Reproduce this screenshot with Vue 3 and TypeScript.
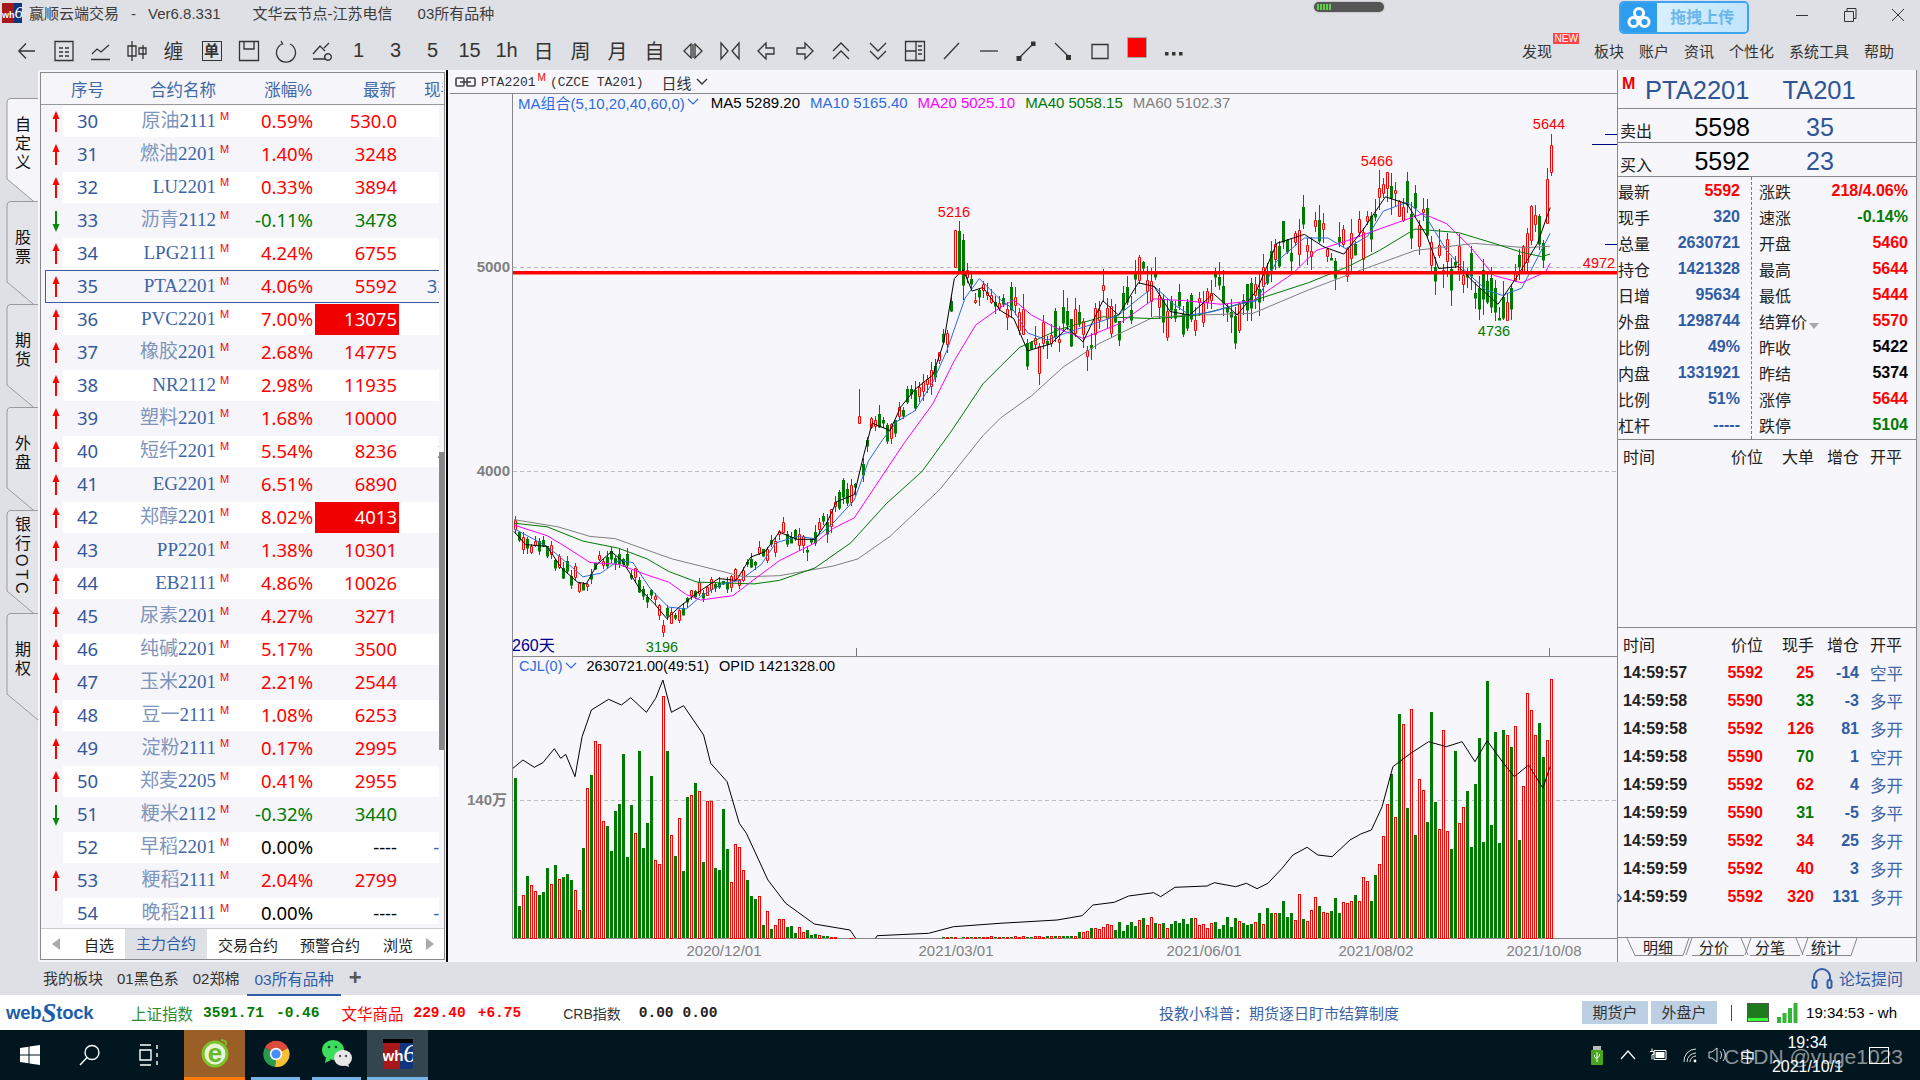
<template>
  <div class="app">
    <header class="top">
      <div class="title-row">
        <div class="wh-logo small"><span>wh</span><i>6</i></div>
        <span class="t1">赢顺云端交易</span>
        <span class="t2">-</span>
        <span class="t3">Ver6.8.331</span>
        <span class="t4">文华云节点-江苏电信</span>
        <span class="t5">03所有品种</span>
        <div class="pill"><b></b><b></b><b></b><b></b><b></b></div>
        <div class="upload">
          <div class="up-ico">
            <svg width="26" height="26" viewBox="0 0 26 26" fill="none" stroke="#fff" stroke-width="3">
              <circle cx="13" cy="8" r="4.6" />
              <circle cx="7.5" cy="17" r="4.6" />
              <circle cx="18.5" cy="17" r="4.6" />
            </svg>
          </div>
          <div class="up-txt">拖拽上传</div>
        </div>
        <div class="win-btns">
          <svg width="14" height="14" viewBox="0 0 14 14" fill="none" stroke="#333"><path d="M1 7.5h12" /></svg>
          <svg width="14" height="14" viewBox="0 0 14 14" fill="none" stroke="#333"><path d="M1.5 3.5h9v10h-9zM4 3.5V.5h9v10h-2.5" /></svg>
          <svg width="14" height="14" viewBox="0 0 14 14" fill="none" stroke="#333"><path d="M1 1l12 12M13 1L1 13" /></svg>
        </div>
      </div>
      <div class="tool-row">
        <div v-for="(it, i) in tools" :key="i" class="tool">
          <svg v-if="it.d" width="24" height="24" viewBox="0 0 24 24" fill="none" stroke="#333" stroke-width="1.3">
            <path :d="it.d" />
            <path v-if="it.f" :d="it.f" fill="#333" stroke="none" />
          </svg>
          <span v-else-if="it.red" class="red-sq"></span>
          <span v-else-if="it.box" class="box-t">{{ it.box }}</span>
          <span v-else class="tool-t">{{ it.t }}</span>
        </div>
        <div class="menus">
          <span class="m-find">发现<em>NEW</em></span>
          <span>板块</span>
          <span>账户</span>
          <span>资讯</span>
          <span>个性化</span>
          <span>系统工具</span>
          <span>帮助</span>
        </div>
      </div>
    </header>

    <main class="body">
      <aside class="side-tabs">
        <div v-for="(s, i) in sideTabs" :key="s" class="side-tab" :class="{ on: i === 0 }">
          <svg width="38" height="112" viewBox="0 0 38 112">
            <path d="M38 .5H11Q7 .5 7 5V81L38 107" />
          </svg>
          <span class="side-label">{{ s }}</span>
        </div>
      </aside>

      <section class="list-wrap">
        <div class="list">
          <div class="list-head">
            <span class="h1">序号</span>
            <span class="h2">合约名称</span>
            <span class="h3">涨幅%</span>
            <span class="h4">最新</span>
            <span class="h5">现手</span>
          </div>
          <div class="list-mid">
            <div class="rows">
              <div v-for="r in rows" :key="r.n" class="row" :class="{ sel: r.n === 35 }">
                <div class="arrow">
                  <svg v-if="dirOf(r) === 'up'" width="10" height="22" viewBox="0 0 10 22">
                    <path d="M5 0L8.5 8H6V21H4V8H1.5z" fill="#f00" />
                  </svg>
                  <svg v-else-if="dirOf(r) === 'down'" width="10" height="22" viewBox="0 0 10 22">
                    <path d="M4 1H6V14H8.5L5 22 1.5 14H4z" fill="#0a8a0a" />
                  </svg>
                </div>
                <div class="cells">
                  <span class="seq">{{ r.n }}</span>
                  <span class="name"><span class="cn">{{ r.cn }}</span>{{ r.code }}</span>
                  <sup class="m">M</sup>
                  <span class="pct" :class="dirOf(r)">{{ r.pct }}</span>
                  <span class="last" :class="[dirOf(r), { hi: r.hi }]">{{ r.last }}</span>
                  <span class="hand"><span>{{ r.hand }}</span></span>
                </div>
              </div>
            </div>
            <div class="scroll"><div class="thumb"></div></div>
          </div>
          <div class="list-tabs">
            <svg class="lt-arrow" width="10" height="14" viewBox="0 0 10 14"><path d="M9 1v12L1 7z" fill="#aaa" /></svg>
            <span class="lt t-a">自选</span>
            <span class="lt t-b">主力合约</span>
            <span class="lt t-c">交易合约</span>
            <span class="lt t-d">预警合约</span>
            <span class="lt t-e">浏览</span>
            <svg class="lt-arrow r" width="10" height="14" viewBox="0 0 10 14"><path d="M1 1v12l8-6z" fill="#aaa" /></svg>
          </div>
        </div>
      </section>
      <div class="sep"></div>

      <section class="chart">
        <div class="chart-head">
          <svg width="21" height="10" viewBox="0 0 21 10" fill="none" stroke="#444" stroke-width="1.6">
            <rect x="1" y="1" width="8" height="8" rx="1" />
            <rect x="12" y="1" width="8" height="8" rx="1" />
            <path d="M5 5h11" />
          </svg>
          <span class="ch-code">PTA2201</span><sup class="ch-m">M</sup>
          <span class="ch-ex">(CZCE TA201)</span>
          <span class="ch-period">日线</span>
          <svg width="12" height="8" viewBox="0 0 12 8" fill="none" stroke="#333" stroke-width="1.4"><path d="M1 1l5 5 5-5" /></svg>
        </div>
        <div class="plot">
          <svg class="plot-svg" width="1169" height="868" viewBox="448 94 1169 868">
            <path d="M512.5 94V938M512 656.5H1617M512 938.5H1617" stroke="#888" fill="none" />
            <path d="M513 267.5H1617M513 471.5H1617M513 800.5H1617" stroke="#bdbdbd" stroke-dasharray="4 3" fill="none" />
            <path d="M856.5 648v8M1549.5 648v8" stroke="#777" fill="none" />
            <g fill="none" stroke-width="1">
              <path :d="candles.redWick" stroke="#f00" />
              <path :d="candles.greenWick" stroke="#007a00" />
              <path :d="candles.redBody" stroke="#f00" fill="#f6f6fb" />
              <path :d="candles.greenBody" fill="#007a00" stroke="none" />
            </g>
            <polyline v-for="l in maLines" :key="l.color" :points="l.pts" :stroke="l.color" fill="none" stroke-width="1" />
            <rect x="513" y="271" width="1104" height="3.5" fill="#f00" />
            <path d="M1605 134.5H1617M1592 144.5H1617M1605 244.5H1617" stroke="#00008b" fill="none" />

            <path :d="vols.red" stroke="#f00" fill="#f6f6fb" shape-rendering="crispEdges" />
            <path :d="vols.green" fill="#007a00" shape-rendering="crispEdges" />
            <polyline :points="cjlPts1" fill="none" stroke="#000" />
            <polyline :points="cjlPts2" fill="none" stroke="#000" />

            <g class="axis-t">
              <text x="510" y="271.5">5000</text>
              <text x="510" y="475.5">4000</text>
              <text x="507" y="805">140万</text>
            </g>
            <g class="peak">
              <text x="954" y="217" fill="#f00">5216</text>
              <text x="1377" y="166" fill="#f00">5466</text>
              <text x="1549" y="129" fill="#f00">5644</text>
              <text x="662" y="652" fill="#007a00">3196</text>
              <text x="1494" y="336" fill="#007a00">4736</text>
              <text x="1599" y="268" fill="#f00">4972</text>
            </g>
            <text class="days" x="512" y="651">260天</text>
            <g class="dates">
              <text x="724" y="956">2020/12/01</text>
              <text x="956" y="956">2021/03/01</text>
              <text x="1204" y="956">2021/06/01</text>
              <text x="1376" y="956">2021/08/02</text>
              <text x="1544" y="956">2021/10/08</text>
            </g>
          </svg>
          <div class="legend ma">
            <span class="lg-blue">MA组合(5,10,20,40,60,0)</span>
            <svg width="12" height="8" viewBox="0 0 12 8" fill="none" stroke="#2f6be0" stroke-width="1.2"><path d="M1 1l5 5 5-5" /></svg>
            <span v-for="m in maLegend" :key="m.t" :style="{ color: m.c }" class="lg-item">{{ m.t }}</span>
          </div>
          <div class="legend vol">
            <span class="lg-blue">CJL(0)</span>
            <svg width="12" height="8" viewBox="0 0 12 8" fill="none" stroke="#2f6be0" stroke-width="1.2"><path d="M1 1l5 5 5-5" /></svg>
            <span class="lg-a">2630721.00(49:51)</span>
            <span class="lg-b">OPID 1421328.00</span>
          </div>
        </div>
      </section>

      <section class="quote">
        <div class="q-title">
          <b class="q-m">M</b>
          <span class="q-c1">PTA2201</span>
          <span class="q-c2">TA201</span>
        </div>
        <div class="q-book">
          <span class="q-lab">卖出</span><span class="q-price">5598</span><span class="q-vol">35</span>
        </div>
        <div class="q-book">
          <span class="q-lab">买入</span><span class="q-price">5592</span><span class="q-vol">23</span>
        </div>
        <div class="q-info">
          <div class="q-col">
            <div v-for="k in infoL" :key="k.l + k.v" class="kv">
              <span>{{ k.l }}</span><b :class="k.c">{{ k.v }}</b>
            </div>
          </div>
          <div class="q-col rr">
            <div v-for="k in infoR" :key="k.l" class="kv">
              <span>{{ k.l }}<i v-if="k.l === '结算价'" class="tri"></i></span><b :class="k.c">{{ k.v }}</b>
            </div>
          </div>
        </div>
        <div class="q-big">
          <div class="tk head first">
            <span>时间</span><span class="ra">价位</span><span class="ra">大单</span><span class="ra">增仓</span><span>开平</span>
          </div>
        </div>
        <div class="q-ticks">
          <div class="tk head">
            <span>时间</span><span class="ra">价位</span><span class="ra">现手</span><span class="ra">增仓</span><span>开平</span>
          </div>
          <div v-for="(t, i) in ticks" :key="i" class="tk line">
            <b class="tm"><i v-if="i === 8" class="cur">›</i>{{ t.time }}</b>
            <b class="ra red">{{ t.p }}</b>
            <b class="ra" :class="t.up ? 'red' : 'green'">{{ t.h }}</b>
            <b class="ra blue">{{ t.d }}</b>
            <span class="kp">{{ t.k }}</span>
          </div>
        </div>
        <div class="q-tabs">
          <svg class="q-tab-line" width="240" height="24" viewBox="1618 938 240 24" fill="none" stroke="#888">
            <path d="M1627 939L1635 956.5H1683L1689 939" />
            <path d="M1686 956L1692 939M1741 939L1748 956M1692 956.5H1744" />
            <path d="M1745 956L1751 939M1796 939L1803 956M1750 956.5H1800" />
            <path d="M1802 956L1808 939M1857 939L1851 956.5H1806" />
          </svg>
          <span class="q-tab">明细</span>
          <span class="q-tab">分价</span>
          <span class="q-tab">分笔</span>
          <span class="q-tab">统计</span>
        </div>
      </section>
    </main>

    <div class="blocks">
      <span class="b-1">我的板块</span>
      <span class="b-2">01黑色系</span>
      <span class="b-3">02郑棉</span>
      <span class="b-4">03所有品种</span>
      <span class="b-plus">+</span>
      <div class="forum">
        <svg width="24" height="24" viewBox="0 0 24 24" fill="none" stroke="#2f5ca5" stroke-width="2">
          <path d="M4 15V11a8 8 0 0 1 16 0v4" />
          <rect x="2.5" y="14" width="4" height="8" rx="2" />
          <rect x="17.5" y="14" width="4" height="8" rx="2" />
        </svg>
        <span>论坛提问</span>
      </div>
    </div>

    <div class="status">
      <div class="webstock">web<i>S</i>tock</div>
      <span class="s-name g1">上证指数</span>
      <span class="s-num green w-a">3591.71</span>
      <span class="s-num green w-b">-0.46</span>
      <span class="s-name r1">文华商品</span>
      <span class="s-num red w-a2">229.40</span>
      <span class="s-num red w-b">+6.75</span>
      <span class="s-name k1">CRB指数</span>
      <span class="s-num k2">0.00</span>
      <span class="s-num k3">0.00</span>
      <span class="s-note">投教小科普：期货逐日盯市结算制度</span>
      <span class="s-btn b1">期货户</span>
      <span class="s-btn">外盘户</span>
      <i class="s-bar"></i>
      <div class="meter"></div>
      <svg class="signal" width="21" height="20" viewBox="0 0 21 20" fill="#35b535">
        <rect x="0" y="14" width="4" height="6" />
        <rect x="5.5" y="10" width="4" height="10" />
        <rect x="11" y="5" width="4" height="15" />
        <rect x="16.5" y="0" width="4" height="20" />
      </svg>
      <span class="s-time">19:34:53 - wh</span>
    </div>

    <footer class="taskbar">
      <div class="tb-ico">
        <svg width="20" height="20" viewBox="0 0 20 20" fill="#fff">
          <path d="M0 3l8.5-1.2V9.5H0zM9.5 1.6L20 0v9.5H9.5zM0 10.5h8.5v7.7L0 17zM9.5 10.5H20V20L9.5 18.4z" />
        </svg>
      </div>
      <div class="tb-ico">
        <svg width="22" height="22" viewBox="0 0 22 22" fill="none" stroke="#fff" stroke-width="1.4">
          <circle cx="13" cy="8.5" r="7" />
          <path d="M8 13.5L1 21" />
        </svg>
      </div>
      <div class="tb-ico">
        <svg width="22" height="22" viewBox="0 0 22 22" fill="none" stroke="#fff" stroke-width="1.4">
          <path d="M1 1h11M1 21h11M1 6h11v10H1zM18 1v4M18 9v4M18 17v4" />
        </svg>
      </div>
      <div class="tile ie">
        <svg width="30" height="34" viewBox="0 0 30 34">
          <circle cx="15" cy="17" r="12" fill="#e6f5d4" stroke="#7cc22f" stroke-width="3" />
          <path d="M21 3Q27 3 26 8" fill="none" stroke="#7cc22f" stroke-width="2" />
          <text x="15" y="25" text-anchor="middle" class="ie-e">e</text>
        </svg>
      </div>
      <div class="tile run">
        <svg width="28" height="28" viewBox="0 0 28 28">
          <path d="M14 14L3 7.5A13 13 0 0 1 26 8z" fill="#dd4a3c" />
          <path d="M14 14L26 8A13 13 0 0 1 13 27z" fill="#f5c033" />
          <path d="M14 14L13 27A13 13 0 0 1 3 7.5z" fill="#2a9a4f" />
          <circle cx="14" cy="14" r="6.2" fill="#fff" />
          <circle cx="14" cy="14" r="4.6" fill="#4b8bf5" />
        </svg>
      </div>
      <div class="tile run">
        <svg width="32" height="30" viewBox="0 0 32 30">
          <ellipse cx="12" cy="11" rx="11" ry="10" fill="#3ddc5c" />
          <path d="M5 18l-1 6 6-3z" fill="#3ddc5c" />
          <ellipse cx="22" cy="19" rx="9" ry="8" fill="#e8e8e8" />
          <path d="M27 24l1 4-5-2z" fill="#e8e8e8" />
          <circle cx="8" cy="8" r="1.3" fill="#0a4a2a" />
          <circle cx="15" cy="8" r="1.3" fill="#0a4a2a" />
          <circle cx="19" cy="17" r="1.2" fill="#555" />
          <circle cx="25" cy="17" r="1.2" fill="#555" />
        </svg>
      </div>
      <div class="tile run active">
        <div class="wh-logo big"><span>wh</span><i>6</i></div>
      </div>
      <div class="tray">
        <svg width="14" height="19" viewBox="0 0 14 19">
          <rect x="3" y="0" width="8" height="4" fill="#bbb" />
          <rect x="1" y="4" width="12" height="15" rx="1" fill="#49a51f" />
          <path d="M7 6v10M4.5 9v2l2.5 2M9.5 8v2L7 12" stroke="#fff" fill="none" />
        </svg>
        <svg class="tr-up" width="16" height="10" viewBox="0 0 16 10" fill="none" stroke="#fff" stroke-width="1.2"><path d="M1 9l7-8 7 8" /></svg>
        <svg class="tr-bat" width="18" height="14" viewBox="0 0 18 14" fill="none" stroke="#fff"><path d="M5 2.5h12v9H5zM3 .5v3M1 3.5h4v3H3v5" /><rect x="6.5" y="4" width="9" height="6" fill="#fff" stroke="none" /></svg>
        <svg class="tr-wifi" width="18" height="16" viewBox="0 0 18 16" fill="none" stroke="#ddd"><path d="M3 15A12 12 0 0 1 15 2M6 15a9 9 0 0 1 9-9M9 15a6 6 0 0 1 6-6" /><circle cx="14" cy="14" r="1.4" fill="#fff" stroke="none" /></svg>
        <svg class="tr-vol" width="20" height="18" viewBox="0 0 20 18" fill="none" stroke="#ddd"><path d="M1 6h3l5-4v14l-5-4H1zM12 5a6 6 0 0 1 0 8M15 3a9 9 0 0 1 0 12" /></svg>
        <span class="tr-zh">中</span>
        <div class="clock"><span>19:34</span><span>2021/10/1</span></div>
        <i class="tr-note"></i>
      </div>
      <span class="watermark">CSDN @yuge1023</span>
    </footer>
  </div>
</template>

<script setup lang="ts">
type Row = { n: number; cn: string; code: string; pct: string; last: string; hand?: string; hi?: boolean };
type Tool = { d?: string; f?: string; t?: string; box?: string; red?: boolean };
type Pt = [number, number];

const tools: Tool[] = [
  { d: 'M20 12H4M11 4.5 3.8 12l7.2 7.5' },
  { d: 'M3 2.5h18v19H3zM7 9h4M13 9h4M7 13h4M13 13h4M7 17h4M13 17h4' },
  { d: 'M2 20.5H21M3 15l5-5 4 3 8-7' },
  { d: 'M6 2v20M2 7h8v10H2zM17 6v14M13 9h7v6h-7z' },
  { t: '缠' },
  { box: '单' },
  { d: 'M2.5 2.5H21.5V21.5H2.5zM7 2.5V10H17V2.5M7 21.5' },
  { d: 'M8 5A9.5 9.5 0 1 0 16 5M7 2l2 3.5' },
  { d: 'M2 15l7-8 5 5M2 20H14M13 9l5-5' , f: 'M17 14a4 4 0 1 1-.1 0zm0 1.4a2.6 2.6 0 1 0 .1 0z' },
  { t: '1' },
  { t: '3' },
  { t: '5' },
  { t: '15' },
  { t: '1h' },
  { t: '日' },
  { t: '周' },
  { t: '月' },
  { t: '自' },
  { d: 'M10 5L3 12l7 7zM14 5l7 7-7 7zM12 5v14' },
  { d: 'M3 4l7 8-7 8zM21 4l-7 8 7 8z' },
  { d: 'M11 4L3 12l8 8v-5h8V9h-8z' },
  { d: 'M13 4l8 8-8 8v-5H5V9h8z' },
  { d: 'M4 12l8-8 8 8M4 20l8-8 8 8' },
  { d: 'M4 4l8 8 8-8M4 12l8 8 8-8' },
  { d: 'M2.5 2.5h19v19h-19zM13 2.5v19M2.5 12H13M15 7h4M15 11h4M15 15h4' },
  { d: 'M4 20L19 4' },
  { d: 'M3 12h18' },
  { d: 'M5 19L19 5', f: 'M2.5 17h5v5h-5zM17 2.5h4.5v4.5H17z' },
  { d: 'M4 4L18 18', f: 'M15 16h5v5h-5z' },
  { d: 'M4 5.5h16v14H4z' },
  { red: true },
  { d: 'M0 0', f: 'M3 13h3.5v3.5H3zM10 13h3.5v3.5H10zM17 13h3.5v3.5H17z' }
];

const sideTabs = ['自定义', '股票', '期货', '外盘', '银行OTC', '期权'];

const rows: Row[] = [
  { n: 30, cn: '原油', code: '2111', pct: '0.59%', last: '530.0' },
  { n: 31, cn: '燃油', code: '2201', pct: '1.40%', last: '3248', hand: '152' },
  { n: 32, cn: '', code: 'LU2201', pct: '0.33%', last: '3894' },
  { n: 33, cn: '沥青', code: '2112', pct: '-0.11%', last: '3478' },
  { n: 34, cn: '', code: 'LPG2111', pct: '4.24%', last: '6755' },
  { n: 35, cn: '', code: 'PTA2201', pct: '4.06%', last: '5592', hand: '3200' },
  { n: 36, cn: '', code: 'PVC2201', pct: '7.00%', last: '13075', hi: true },
  { n: 37, cn: '橡胶', code: '2201', pct: '2.68%', last: '14775' },
  { n: 38, cn: '', code: 'NR2112', pct: '2.98%', last: '11935' },
  { n: 39, cn: '塑料', code: '2201', pct: '1.68%', last: '10000' },
  { n: 40, cn: '短纤', code: '2201', pct: '5.54%', last: '8236', hand: '215' },
  { n: 41, cn: '', code: 'EG2201', pct: '6.51%', last: '6890' },
  { n: 42, cn: '郑醇', code: '2201', pct: '8.02%', last: '4013', hi: true },
  { n: 43, cn: '', code: 'PP2201', pct: '1.38%', last: '10301', hand: '188' },
  { n: 44, cn: '', code: 'EB2111', pct: '4.86%', last: '10026' },
  { n: 45, cn: '尿素', code: '2201', pct: '4.27%', last: '3271' },
  { n: 46, cn: '纯碱', code: '2201', pct: '5.17%', last: '3500' },
  { n: 47, cn: '玉米', code: '2201', pct: '2.21%', last: '2544' },
  { n: 48, cn: '豆一', code: '2111', pct: '1.08%', last: '6253' },
  { n: 49, cn: '淀粉', code: '2111', pct: '0.17%', last: '2995' },
  { n: 50, cn: '郑麦', code: '2205', pct: '0.41%', last: '2955' },
  { n: 51, cn: '粳米', code: '2112', pct: '-0.32%', last: '3440' },
  { n: 52, cn: '早稻', code: '2201', pct: '0.00%', last: '----', hand: '------' },
  { n: 53, cn: '粳稻', code: '2111', pct: '2.04%', last: '2799' },
  { n: 54, cn: '晚稻', code: '2111', pct: '0.00%', last: '----', hand: '------' }
];

function dirOf(r: Row) {
  if (r.pct.startsWith('-')) return 'down';
  return r.pct === '0.00%' ? 'flat' : 'up';
}

const infoL = [
  { l: '最新', v: '5592', c: 'red' },
  { l: '现手', v: '320', c: 'blue' },
  { l: '总量', v: '2630721', c: 'blue' },
  { l: '持仓', v: '1421328', c: 'blue' },
  { l: '日增', v: '95634', c: 'blue' },
  { l: '外盘', v: '1298744', c: 'blue' },
  { l: '比例', v: '49%', c: 'blue' },
  { l: '内盘', v: '1331921', c: 'blue' },
  { l: '比例', v: '51%', c: 'blue' },
  { l: '杠杆', v: '-----', c: 'blue' }
];
const infoR = [
  { l: '涨跌', v: '218/4.06%', c: 'red' },
  { l: '速涨', v: '-0.14%', c: 'green' },
  { l: '开盘', v: '5460', c: 'red' },
  { l: '最高', v: '5644', c: 'red' },
  { l: '最低', v: '5444', c: 'red' },
  { l: '结算价', v: '5570', c: 'red' },
  { l: '昨收', v: '5422', c: 'black' },
  { l: '昨结', v: '5374', c: 'black' },
  { l: '涨停', v: '5644', c: 'red' },
  { l: '跌停', v: '5104', c: 'green' }
];
const ticks = [
  { time: '14:59:57', p: 5592, h: 25, up: true, d: -14, k: '空平' },
  { time: '14:59:58', p: 5590, h: 33, up: false, d: -3, k: '多平' },
  { time: '14:59:58', p: 5592, h: 126, up: true, d: 81, k: '多开' },
  { time: '14:59:58', p: 5590, h: 70, up: false, d: 1, k: '空开' },
  { time: '14:59:59', p: 5592, h: 62, up: true, d: 4, k: '多开' },
  { time: '14:59:59', p: 5590, h: 31, up: false, d: -5, k: '多平' },
  { time: '14:59:59', p: 5592, h: 34, up: true, d: 25, k: '多开' },
  { time: '14:59:59', p: 5592, h: 40, up: true, d: 3, k: '多开' },
  { time: '14:59:59', p: 5592, h: 320, up: true, d: 131, k: '多开' }
];

const maLegend = [
  { t: 'MA5 5289.20', c: '#000' },
  { t: 'MA10 5165.40', c: '#2f6be0' },
  { t: 'MA20 5025.10', c: '#ff00ff' },
  { t: 'MA40 5058.15', c: '#007a00' },
  { t: 'MA60 5102.37', c: '#808080' }
];

// raw coordinates were read off two crops of the chart, so map them back to page pixels
function toPts(raw: number[], ox: number, sx: number, oy: number, sy: number): Pt[] {
  const out: Pt[] = [];
  for (let i = 0; i < raw.length; i += 2) out.push([ox + raw[i] / sx, oy + raw[i + 1] / sy]);
  return out;
}
const join2 = (a: number[], b: number[]) => [...toPts(a, 440, 2.8, 100, 2.8), ...toPts(b, 1000, 2.53, 100, 2.79)];
const str = (p: Pt[]) => p.map((q) => q[0].toFixed(1) + ',' + q[1].toFixed(1)).join(' ');

const ma5 = join2(
  [207,1208,240,1245,300,1250,340,1310,385,1350,410,1355,440,1300,480,1265,510,1290,560,1370,600,1410,635,1452,670,1420,720,1380,780,1340,830,1345,870,1280,910,1265,950,1210,1000,1230,1050,1230,1085,1180,1110,1125,1160,1105,1185,1000,1210,905,1260,925,1290,860,1330,810,1380,770,1410,680,1440,500,1465,475,1490,535,1520,525,1570,590],
  [35,610,70,700,100,690,130,680,170,635,210,675,260,560,300,600,350,510,390,520,430,590,480,600,540,540,600,600,650,530,700,400,770,375,820,410,870,430,920,360,975,270,1030,290,1080,380,1110,470,1160,465,1200,510,1260,570,1310,490,1360,400,1392,300]
);
const ma10 = join2(
  [207,1200,300,1250,360,1300,400,1335,450,1325,500,1290,540,1295,590,1370,640,1420,690,1425,730,1390,790,1355,840,1345,900,1300,940,1240,1000,1222,1050,1228,1100,1185,1160,1120,1200,1010,1240,950,1280,900,1330,870,1380,790,1420,700,1470,555,1510,500,1570,560],
  [30,580,70,650,120,670,180,645,250,620,300,600,350,555,390,520,440,570,480,600,540,590,600,570,650,560,700,450,770,385,830,385,875,415,930,380,970,310,1030,285,1080,330,1130,420,1180,480,1230,530,1270,545,1320,525,1360,440,1392,372]
);
const ma20 = join2(
  [207,1190,300,1220,350,1250,420,1295,500,1300,580,1330,640,1350,690,1385,730,1400,820,1388,870,1350,950,1290,1050,1240,1100,1200,1160,1170,1220,1080,1300,960,1380,850,1440,730,1500,630,1570,580],
  [35,558,80,600,140,635,210,665,300,625,390,555,470,560,560,570,640,560,740,485,800,420,880,392,960,360,1070,317,1130,345,1190,410,1250,490,1320,510,1380,480,1392,455]
);
const ma40 = join2(
  [207,1185,300,1195,400,1235,500,1255,580,1285,640,1320,720,1350,880,1355,950,1345,1050,1310,1150,1240,1250,1130,1350,1040,1430,930,1520,795,1570,745],
  [50,690,150,640,260,605,390,610,500,600,640,560,780,510,880,465,960,420,1050,360,1160,370,1250,400,1320,425,1370,437,1392,430]
);
const ma60 = join2(
  [207,1175,330,1195,420,1222,490,1228,650,1285,850,1335,950,1332,1100,1305,1170,1285,1260,1222,1400,1090,1520,940,1570,890],
  [80,825,160,745,250,680,390,605,500,600,640,595,780,530,900,480,1050,420,1200,400,1330,412,1392,408]
);
const maLines = [
  { color: '#808080', pts: str(ma60) },
  { color: '#007a00', pts: str(ma40) },
  { color: '#ff00ff', pts: str(ma20) },
  { color: '#2f6be0', pts: str(ma10) },
  { color: '#000', pts: str(ma5) }
];

function interp(p: Pt[], x: number) {
  if (x <= p[0][0]) return p[0][1];
  for (let i = 1; i < p.length; i++) {
    if (x <= p[i][0]) {
      const t = (x - p[i - 1][0]) / (p[i][0] - p[i - 1][0]);
      return p[i - 1][1] + t * (p[i][1] - p[i - 1][1]);
    }
  }
  return p[p.length - 1][1];
}

let seed = 4711;
function rnd() {
  seed = (seed * 16807) % 2147483647;
  return seed / 2147483647;
}

// slot x -> [up, body top, body bottom, high, low]
const fixedCandles: Record<number, [boolean, number, number, number, number]> = {
  662: [true, 625, 632, 620, 637],
  858: [true, 416, 423, 389, 423],
  954: [true, 230, 267, 230, 268],
  958: [false, 231, 271, 221, 272],
  962: [false, 240, 285, 234, 300],
  1378: [true, 188, 197, 170, 210],
  1494: [false, 288, 312, 280, 321],
  1526: [true, 233, 262, 228, 272],
  1530: [true, 206, 240, 205, 245],
  1534: [true, 215, 224, 205, 232],
  1538: [false, 216, 244, 214, 250],
  1542: [false, 243, 260, 240, 268],
  1546: [true, 179, 223, 168, 224],
  1550: [true, 145, 172, 134, 176]
};

const upAt: boolean[] = [];
function buildCandles() {
  let redWick = '';
  let greenWick = '';
  let redBody = '';
  let greenBody = '';
  for (let k = 0; k < 260; k++) {
    const x = 514 + 4 * k;
    const spread = x < 800 ? 10 : x < 1000 ? 16 : 27;
    const m = interp(ma5, x);
    const c = m + (rnd() - 0.5) * spread * 1.5;
    const h = 2 + rnd() * spread;
    let up = rnd() > 0.5;
    let top = c - h / 2;
    let bot = c + h / 2;
    const minY = x < 1000 ? 222 : x < 1300 ? 204 : 172;
    // keep the 4736 low as the lowest point of its stretch, the label sits right below
    const maxY = x > 1470 && x < 1520 ? 320 : 637;
    let hi = Math.max(minY, top - rnd() * spread * 0.6);
    let lo = Math.min(maxY, bot + rnd() * spread * 0.6);
    top = Math.max(top, hi);
    bot = Math.min(bot, lo);
    const fix = fixedCandles[x];
    if (fix) [up, top, bot, hi, lo] = fix;
    upAt.push(up);
    const a = Math.round(top) + 0.5;
    const b = Math.round(bot) + 0.5;
    if (up) {
      redWick += `M${x + 1.5} ${Math.round(hi)}V${a}M${x + 1.5} ${b}V${Math.round(lo)}`;
      redBody += `M${x + 0.5} ${a}h2V${b}h-2z`;
    } else {
      greenWick += `M${x + 1.5} ${Math.round(hi)}V${Math.round(lo)}`;
      greenBody += `M${x} ${a - 0.5}h3V${b}h-3z`;
    }
  }
  return { redWick, greenWick, redBody, greenBody };
}
const candles = buildCandles();

const volEnv = toPts(
  [18,640,110,650,115,320,135,300,225,300,320,450,340,640,370,780,440,850,470,862,500,865,620,862,800,855,830,820,900,800,1000,800,1060,790,1100,730,1200,700,1230,570,1250,250,1470,200],
  500, 1.4, 650, 3
);
const volFix: Record<number, [number, boolean]> = {};
for (const [X, Y, up] of [[1470,88,1],[1380,93,0],[1436,130,1],[1441,180,1],[1302,185,0],[1275,178,1],[1258,192,0],[1263,222,1],[226,138,1],[192,303,0],[130,273,1],[137,283,1],[232,303,0],[18,385,0]]) {
  const slot = 514 + 4 * Math.round((500 + X / 1.4 - 514) / 4);
  volFix[slot] = [650 + Y / 3, up === 1];
}

function buildVols() {
  let red = '';
  let green = '';
  for (let k = 0; k < 260; k++) {
    const x = 514 + 4 * k;
    const env = 938 - interp(volEnv, x);
    let y = 938 - env * (0.35 + 0.65 * rnd());
    let up = upAt[k];
    const fix = volFix[x];
    if (fix) [y, up] = fix;
    if ((x > 856 && x < 942) && !fix) continue;
    const top = Math.round(y);
    if (up) red += `M${x + 0.5} ${top + 0.5}h2V938h-2z`;
    else green += `M${x} ${top}h3V938h-3z`;
  }
  return { red, green };
}
const vols = buildVols();

const cjlPts1 = str(toPts(
  [18,355,32,330,48,352,60,338,76,296,85,325,92,313,105,380,115,260,128,180,152,148,170,165,183,143,205,187,218,145,228,90,240,187,257,167,285,255,295,340,318,395,335,520,345,550,375,690,400,760,440,822,490,840,498,865],
  500, 1.4, 650, 3
));
const cjlPts2 = str(toPts(
  [526,865,528,857,600,850,635,830,700,820,780,810,815,797,830,765,860,757,880,738,915,728,925,740,945,712,990,708,1000,698,1030,710,1045,700,1060,716,1075,700,1095,655,1110,615,1130,592,1145,615,1165,620,1190,570,1205,552,1220,540,1235,470,1250,350,1275,310,1300,275,1325,290,1347,275,1365,335,1382,272,1405,340,1420,380,1440,345,1460,415,1470,350],
  500, 1.4, 650, 3
));
</script>

<style>
html, body { margin: 0; padding: 0; background: #dfe0e5; overflow: hidden; }
</style>

<style scoped>
.app {
  width: 1920px;
  height: 1080px;
  display: flex;
  flex-direction: column;
  background: #dfe0e5;
  font-family: "Liberation Sans", "Noto Sans CJK SC", sans-serif;
  color: #333;
  overflow: hidden;
  position: relative;
}
.top { height: 70px; flex: none; }
.title-row { height: 31px; display: flex; align-items: flex-start; font-size: 15px; color: #3c3c3c; line-height: 28px; }
.wh-logo { display: flex; background: linear-gradient(90deg, #a81818 0 58%, #10357f 58%); color: #fff; font-weight: 700; overflow: hidden; }
.wh-logo i { font-style: italic; font-family: "Liberation Serif", serif; font-weight: 400; }
.wh-logo.small { width: 20px; height: 20px; margin: 3px 7px 0 2px; font-size: 9px; line-height: 24px; }
.wh-logo.small i { font-size: 17px; line-height: 20px; }
.wh-logo.big { width: 30px; height: 30px; font-size: 15px; line-height: 34px; background: linear-gradient(180deg, #000 0 15%, transparent 15%), linear-gradient(90deg, #a81818 0 58%, #10357f 58%); }
.wh-logo.big i { font-size: 26px; line-height: 30px; }
.t2 { margin-left: 12px; }
.t3 { margin-left: 12px; }
.t4 { margin-left: 32px; }
.t5 { margin-left: 25px; }
.pill { margin: 2px 0 0 820px; width: 70px; height: 10px; border-radius: 5px; background: #555; display: flex; gap: 1px; padding: 2px 0 0 3px; box-sizing: border-box; box-shadow: 0 0 2px #999; }
.pill b { width: 2px; height: 6px; background: #5fd24a; }
.upload { display: flex; margin: 1px 0 0 235px; width: 130px; height: 33px; border: 2px solid #3ea2f3; border-radius: 5px; box-sizing: border-box; overflow: hidden; }
.up-ico { width: 36px; background: #2d9df0; display: flex; align-items: center; justify-content: center; }
.up-txt { flex: 1; background: linear-gradient(90deg, #d9f0fd, #bfe4fb); color: #6ab6ee; font-size: 16px; font-weight: 700; text-align: center; line-height: 29px; }
.win-btns { display: flex; gap: 34px; margin: 8px 0 0 46px; }
.win-btns svg { display: block; }

.tool-row { height: 39px; display: flex; align-items: center; padding-left: 8px; box-sizing: border-box; }
.tool { width: 37px; height: 30px; flex: none; display: flex; align-items: center; justify-content: center; }
.tool svg { display: block; }
.tool-t { font-size: 20px; color: #333; font-weight: 400; margin-left: -2px; }
.box-t { width: 20px; height: 20px; border: 1.3px solid #333; box-sizing: border-box; font-size: 15px; line-height: 17px; text-align: center; font-weight: 700; }
.red-sq { width: 18px; height: 19px; background: #f00; border: 1px solid #aaa; margin-top: -6px; }
.menus { margin-left: 330px; display: flex; gap: 15px; font-size: 15px; color: #333; }
.m-find { position: relative; margin-right: 27px; }
.m-find em { position: absolute; left: 31px; top: -7px; background: #f44; color: #fff; font-size: 10px; font-style: normal; line-height: 11px; padding: 0 1.5px; }

.body { height: 892px; flex: none; display: flex; }
.side-tabs { width: 38px; flex: none; padding-top: 28px; box-sizing: border-box; }
.side-tab { height: 103px; position: relative; display: flex; align-items: flex-start; }
.side-tab svg { position: absolute; left: 0; top: 0; fill: #e3e4e9; stroke: #9a9a9a; }
.side-tab.on svg { fill: #f5f5fa; }
.side-label { position: relative; margin: 0 0 0 13px; height: 93px; display: flex; justify-content: center; writing-mode: vertical-rl; font-size: 16px; line-height: 16px; letter-spacing: 3px; color: #111; }

.list-wrap { width: 408px; flex: none; background: #f5f5fa; padding: 2px 1px 2px 2px; box-sizing: border-box; }
.list { height: 100%; border: 1px solid #8a8a8a; box-sizing: border-box; display: flex; flex-direction: column; background: #f5f5fa; }
.list-head { height: 31px; border-bottom: 1px solid #9a9a9a; display: flex; align-items: center; flex: none; font-size: 16.5px; color: #3e68a8; }
.h1 { width: 69px; padding-left: 30px; box-sizing: border-box; }
.h2 { width: 106px; text-align: right; }
.h3 { width: 96px; text-align: right; }
.h4 { width: 84px; text-align: right; }
.h5 { width: 47px; padding-left: 28px; box-sizing: border-box; overflow: hidden; white-space: nowrap; }
.list-mid { height: 819px; flex: none; display: flex; overflow: hidden; }
.rows { width: 398px; flex: none; }
.row { height: 33px; display: flex; position: relative; }
.row.sel::after { content: ""; position: absolute; left: 4px; right: 0; top: 0; bottom: 0; border: 1.5px solid #3a5f9e; border-right: 0; }
.arrow { width: 22px; flex: none; display: flex; align-items: center; justify-content: flex-end; padding-right: 2px; box-sizing: border-box; }
.cells { flex: 1; display: flex; align-items: center; margin: 1px 0; font-size: 18.5px; font-family: "Noto Sans", "Noto Sans CJK SC", sans-serif; line-height: 29px; min-width: 0; }
.row:nth-child(odd) .cells { background: #fff; }
.seq { width: 47px; padding: 0 0 2px 14px; box-sizing: border-box; color: #35589a; }
.name { width: 106px; padding-bottom: 2px; text-align: right; color: #3d66a6; font-family: "Liberation Serif", "Noto Sans CJK SC", serif; font-size: 19px; white-space: nowrap; }
.cn { color: #7d94bb; }
.m { width: 15px; padding-left: 4px; box-sizing: border-box; color: #f00; font-size: 11px; font-family: "Liberation Sans", sans-serif; line-height: 1; align-self: flex-start; margin-top: 5px; }
.pct { width: 82px; padding-bottom: 2px; text-align: right; }
.last { width: 84px; margin-left: 2px; height: 31px; padding-right: 2px; box-sizing: border-box; text-align: right; }
.hand { width: 40px; overflow: hidden; height: 31px; }
.hand span { display: block; width: 70px; text-align: right; color: #3d66a6; }
.up { color: #f00; }
.down { color: #007a00; }
.flat { color: #000; }
.last.hi { background: #f00000; color: #fff; }
.scroll { width: 5px; flex: none; }
.thumb { width: 5px; height: 298px; margin-top: 347px; background: #888; }
.list-tabs { margin-top: auto; height: 31px; flex: none; border-top: 1px solid #ccc; background: #fff; box-sizing: border-box; display: flex; align-items: center; font-size: 15px; position: relative; color: #222; }
.lt-arrow { margin-left: 10px; flex: none; }
.lt { white-space: nowrap; }
.t-a { margin-left: 23px; }
.t-b { margin-left: 11px; width: 82px; text-align: center; background: #dfe0e5; color: #2f5ca5; line-height: 30px; }
.t-c { margin-left: 11px; }
.t-d { margin-left: 22px; }
.t-e { margin-left: 23px; }
.lt-arrow.r { margin-left: 12px; }
.sep { width: 2px; flex: none; background: #000; height: 892px; }

.chart { width: 1169px; flex: none; background: #f6f6fb; display: flex; flex-direction: column; }
.chart-head { height: 24px; flex: none; box-sizing: border-box; margin-left: 2px; padding: 1px 0 0 5px; border-bottom: 1px solid #888; display: flex; align-items: center; color: #333; }
.ch-code, .ch-ex { font-family: "Liberation Mono", monospace; font-size: 13px; }
.ch-code { margin-left: 5px; }
.ch-m { color: #f00; font-size: 10px; margin: -8px 0 0 2px; line-height: 1; }
.ch-ex { margin-left: 4px; }
.ch-period { margin-left: 18px; font-size: 15px; margin-right: 4px; }
.plot { flex: 1; position: relative; }
.plot-svg { display: block; }
.axis-t text { font-size: 15px; font-weight: 700; fill: #808080; text-anchor: end; }
.peak text { font-size: 14.5px; text-anchor: middle; }
.days { font-size: 16px; fill: #00008b; }
.dates text { font-size: 15px; fill: #808080; text-anchor: middle; }
.ie-e { font-size: 26px; font-weight: 700; fill: #6db52a; font-family: "Liberation Sans", sans-serif; }
.legend { position: absolute; display: flex; align-items: center; height: 20px; font-size: 14.5px; white-space: nowrap; color: #000; }
.legend.ma { left: 70px; top: -2px; font-size: 15px; }
.legend.vol { left: 71px; top: 562px; }
.lg-blue { color: #2f6be0; margin-right: 2px; }
.lg-item { margin-left: 10px; }
.legend.ma svg + .lg-item { margin-left: 12px; }
.lg-a { margin-left: 10px; }
.lg-b { margin-left: 10px; }

.quote { width: 300px; flex: none; background: #f6f6fb; border-left: 1px solid #888; border-right: 1px solid #888; box-sizing: border-box; display: flex; flex-direction: column; margin-right: 3px; }
.q-title { height: 39px; flex: none; box-sizing: border-box; display: flex; align-items: center; color: #2f5597; font-size: 25.5px; border-bottom: 1px solid #888; position: relative; padding: 2px 0 0 27px; }
.q-m { position: absolute; left: 4px; top: 5px; color: #e00; font-size: 16px; font-weight: 700; }
.q-c2 { margin-left: 33px; }
.q-book { height: 34px; flex: none; display: flex; align-items: center; border-bottom: 1px solid #888; box-sizing: border-box; padding: 3px 0 0 2px; position: relative; }
.q-lab { width: 33px; font-size: 16px; margin-top: 5px; color: #222; }
.q-price { width: 97px; text-align: right; font-size: 25px; color: #000; }
.q-vol { margin-left: 56px; font-size: 25px; color: #2f5597; }
.q-info { height: 263px; flex: none; display: grid; grid-template-columns: 133px 165px; border-bottom: 1px solid #888; box-sizing: border-box; }
.q-col { padding: 1px 11px 0 0; box-sizing: border-box; }
.q-col.rr { border-left: 1px dashed #777; padding: 1px 8px 0 7px; }
.kv { height: 26px; display: flex; align-items: center; justify-content: space-between; font-size: 16px; color: #222; white-space: nowrap; }
.kv b { font-size: 16px; }
.red { color: #f00; }
.blue { color: #2f5ca5; }
.green { color: #007a00; }
.black { color: #000; }
.tri { display: inline-block; width: 0; height: 0; border: 5px solid transparent; border-top: 6px solid #aaa; border-bottom: 0; margin-left: 2px; vertical-align: -1px; }
.q-big { height: 188px; flex: none; border-bottom: 1px solid #888; box-sizing: border-box; }
.q-ticks { height: 310px; flex: none; border-bottom: 1px solid #888; box-sizing: border-box; }
.tk { display: grid; grid-template-columns: 90px 50px 51px 45px 1fr; padding-left: 5px; align-items: center; font-size: 16px; white-space: nowrap; }
.tk.head { height: 31px; color: #222; }
.tk.head.first { height: 31px; }
.tk.line { height: 28px; }
.tk > :last-child { margin-left: 11px; }
.ra { text-align: right; }
.tm { position: relative; color: #222; }
.cur { position: absolute; left: -7px; top: -3px; font-style: normal; color: #2f5ca5; font-size: 20px; font-weight: 400; }
.kp { color: #3d66a6; font-size: 16.5px; }
.q-tabs { flex: 1; display: flex; position: relative; padding: 1px 0 0 25px; font-size: 15px; color: #222; }
.q-tab-line { position: absolute; left: 0; top: -1px; }
.q-tab { width: 56px; line-height: 18px; position: relative; }

.blocks { height: 33px; flex: none; display: flex; align-items: center; font-size: 15px; color: #333; padding: 0 0 2px 43px; box-sizing: border-box; white-space: nowrap; }
.b-2 { margin-left: 14px; }
.b-3 { margin-left: 14px; }
.b-4 { margin-left: 15px; color: #2f5ca5; position: relative; font-size: 15.5px; }
.b-4::after { content: ""; position: absolute; left: -7px; right: -7px; bottom: -7px; height: 2px; background: #2f5ca5; }
.b-plus { margin-left: 15px; font-size: 22px; font-weight: 700; color: #555; line-height: 20px; }
.forum { margin-left: auto; margin-right: 17px; display: flex; align-items: center; gap: 5px; color: #2f5ca5; font-size: 16px; }
.forum svg { display: block; }

.status { height: 35px; flex: none; background: #fff; display: flex; align-items: center; white-space: nowrap; font-size: 15px; padding-right: 23px; box-sizing: border-box; }
.webstock { margin-left: 6px; width: 86px; font-size: 18.5px; font-weight: 700; color: #1d5da9; letter-spacing: -0.2px; display: flex; align-items: center; }
.webstock i { font-size: 27px; line-height: 20px; font-family: "Liberation Serif", serif; }
.s-name { flex: none; }
.g1 { margin-left: 39px; color: #2f8a2f; font-size: 15.5px; }
.r1 { margin-left: 22px; color: #f00; font-size: 15.5px; }
.k1 { margin-left: 42px; color: #333; font-size: 14px; }
.s-num { font-family: "Liberation Mono", monospace; font-size: 14.5px; font-weight: 700; }
.w-a { margin-left: 10px; }
.w-a2 { margin-left: 10px; }
.w-b { margin-left: 12px; }
.k2 { margin-left: 18px; color: #222; }
.k3 { margin-left: 9px; color: #222; }
.s-note { margin-left: auto; color: #3d62a5; }
.s-btn { width: 66px; height: 23px; background: #bdcfe2; text-align: center; line-height: 23px; color: #333; margin-left: 3px; }
.s-btn.b1 { margin-left: 183px; }
.s-bar { width: 1px; height: 16px; background: #e00; margin-left: 14px; }
.meter { width: 22px; height: 19px; margin-left: 15px; background: linear-gradient(180deg, #1d7a1d 0 80%, #3cff3c 80%); border: 1px solid #555; box-sizing: border-box; }
.signal { margin-left: 8px; }
.s-time { margin-left: 8px; color: #000; }

.taskbar { height: 50px; flex: none; background: #01161f; display: flex; position: relative; }
.tb-ico { width: 60px; height: 50px; display: flex; align-items: center; justify-content: center; }
.tile { height: 50px; width: 61px; display: flex; align-items: center; justify-content: center; position: relative; box-sizing: border-box; padding-bottom: 3px; }
.tile.ie { margin-left: 4px; background: #9a5f26; box-shadow: inset 0 -3px 0 #ff7a00; }
.tile.run::after { content: ""; position: absolute; left: 6px; right: 6px; bottom: 0; height: 3px; background: #76b4e6; }
.tile.active { background: #33464f; }
.tile.active::after { left: 0; right: 0; }
.tray { margin-left: auto; margin-right: 31px; display: flex; align-items: center; color: #fff; }
.tr-up { margin-left: 16px; }
.tr-bat { margin-left: 13px; }
.tr-wifi { margin-left: 14px; }
.tr-vol { margin-left: 9px; }
.tr-zh { margin-left: 12px; font-size: 15px; }
.clock { width: 85px; margin-left: 10px; display: flex; flex-direction: column; align-items: center; font-size: 16px; line-height: 24px; }
.tr-note { width: 20px; height: 17px; margin-left: 19px; border: 1px solid #fff; box-sizing: border-box; }
.watermark { position: absolute; right: 17px; top: 15px; font-size: 21px; color: rgba(255, 255, 255, 0.55); }
</style>
